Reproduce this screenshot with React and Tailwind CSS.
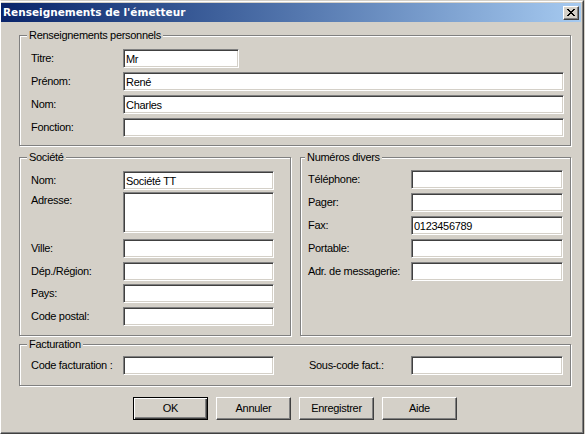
import React from 'react';

const sunken =
  'bg-white border border-[#808080] border-r-white border-b-white shadow-[inset_1px_1px_0_#404040,inset_-1px_-1px_0_#d4d0c8] outline-none px-[2px] text-black';

const Group = ({ title, className, legendClass, children }) => (
  <div className={`border border-[#808080] shadow-[inset_1px_1px_0_#fff,1px_1px_0_#fff] ${className}`}>
    <span className={`block w-fit -mt-[7px] h-[13px] leading-[13px] px-[2px] bg-[#d4d0c8] ${legendClass}`}>
      {title}
    </span>
    {children}
  </div>
);

const Row = ({ label, labelW, inputW, value = '', className = '' }) => (
  <div className={`flex items-center h-[19px] ${className}`}>
    <span className={`${labelW} shrink-0 leading-[13px]`}>{label}</span>
    <input readOnly value={value} className={`${sunken} ${inputW} h-[19px]`} />
  </div>
);

const Button = ({ children, def }) => (
  <button
    className={
      def
        ? 'w-[75px] h-[23px] border border-black shadow-[inset_1px_1px_0_#fff,inset_-1px_-1px_0_#404040,inset_-2px_-2px_0_#808080] bg-[#d4d0c8] leading-[13px]'
        : 'w-[75px] h-[23px] border border-white border-r-[#404040] border-b-[#404040] shadow-[inset_-1px_-1px_0_#808080] bg-[#d4d0c8] leading-[13px]'
    }
  >
    {children}
  </button>
);

const CloseIcon = () => (
  <svg width="8" height="7" viewBox="0 0 8 7" shapeRendering="crispEdges">
    <g fill="#000">
      <rect x="0" y="0" width="2" height="1" />
      <rect x="6" y="0" width="2" height="1" />
      <rect x="1" y="1" width="2" height="1" />
      <rect x="5" y="1" width="2" height="1" />
      <rect x="2" y="2" width="4" height="1" />
      <rect x="3" y="3" width="2" height="1" />
      <rect x="2" y="4" width="4" height="1" />
      <rect x="1" y="5" width="2" height="1" />
      <rect x="5" y="5" width="2" height="1" />
      <rect x="0" y="6" width="2" height="1" />
      <rect x="6" y="6" width="2" height="1" />
    </g>
  </svg>
);

export default function App() {
  return (
    <div className="w-[585px] h-[434px] bg-[#d4d0c8]">
      <div className="w-[584px] h-[434px] border border-[#d4d0c8] border-l-white border-r-[#404040] border-b-[#404040]">
        <div className="h-full border border-white border-l-0 border-r-[#808080] border-b-[#808080] pt-px pr-px pb-px flex flex-col font-['Liberation_Sans',Arial,sans-serif] text-[11px] tracking-[-0.3px] text-black">
          {/* title bar */}
          <div className="h-[19px] shrink-0 flex items-center justify-between bg-linear-to-r from-[#0a246a] to-[#a6caf0] pl-[2px] pr-[2px]">
            <span className="font-['DejaVu_Sans',sans-serif] font-bold text-[10.5px] tracking-normal text-white leading-[13px]">
              Renseignements de l'émetteur
            </span>
            <span className="w-[16px] h-[14px] flex items-center justify-center bg-[#d4d0c8] border border-white border-r-[#404040] border-b-[#404040] shadow-[inset_-1px_-1px_0_#808080]">
              <CloseIcon />
            </span>
          </div>

          {/* client area */}
          <div className="pl-[18px] flex flex-col">
            <Group title="Renseignements personnels" className="mt-[13px] w-[552px] pb-[8px]" legendClass="ml-[7px]">
              <div className="mt-[7px] pl-[11px] flex flex-col gap-[4px]">
                <Row label="Titre:" labelW="w-[92px]" inputW="w-[116px]" value="Mr" />
                <Row label="Prénom:" labelW="w-[92px]" inputW="w-[441px]" value="René" />
                <Row label="Nom:" labelW="w-[92px]" inputW="w-[441px]" value="Charles" />
                <Row label="Fonction:" labelW="w-[92px]" inputW="w-[441px]" />
              </div>
            </Group>

            <div className="mt-[11px] flex gap-[9px]">
              <Group title="Société" className="w-[272px] pb-[9px]" legendClass="ml-[7px]">
                <div className="pl-[11px] flex flex-col">
                  <Row label="Nom:" labelW="w-[92px]" inputW="w-[151px]" value="Société TT" className="mt-[7px]" />
                  <div className="mt-[2px] flex items-start h-[41px]">
                    <span className="w-[92px] shrink-0 leading-[13px] pt-[2px]">Adresse:</span>
                    <textarea readOnly className={`${sunken} w-[151px] h-[41px] resize-none`} />
                  </div>
                  <Row label="Ville:" labelW="w-[92px]" inputW="w-[151px]" className="mt-[6px]" />
                  <Row label="Dép./Région:" labelW="w-[92px]" inputW="w-[151px]" className="mt-[4px]" />
                  <Row label="Pays:" labelW="w-[92px]" inputW="w-[151px]" className="mt-[3px]" />
                  <Row label="Code postal:" labelW="w-[92px]" inputW="w-[151px]" className="mt-[4px]" />
                </div>
              </Group>

              <Group title="Numéros divers" className="w-[271px]" legendClass="ml-[4px]">
                <div className="mt-[6px] pl-[7px] flex flex-col gap-[4px]">
                  <Row label="Téléphone:" labelW="w-[103px]" inputW="w-[152px]" />
                  <Row label="Pager:" labelW="w-[103px]" inputW="w-[152px]" />
                  <Row label="Fax:" labelW="w-[103px]" inputW="w-[152px]" value="0123456789" />
                  <Row label="Portable:" labelW="w-[103px]" inputW="w-[152px]" />
                  <Row label="Adr. de messagerie:" labelW="w-[103px]" inputW="w-[152px]" />
                </div>
              </Group>
            </div>

            <Group title="Facturation" className="mt-[8px] w-[552px] pb-[10px]" legendClass="ml-[7px]">
              <div className="mt-[5px] pl-[11px] flex items-center h-[19px]">
                <span className="w-[92px] shrink-0 leading-[13px]">Code facturation :</span>
                <input readOnly className={`${sunken} w-[151px] h-[19px]`} />
                <span className="ml-[35px] w-[102px] shrink-0 leading-[13px]">Sous-code fact.:</span>
                <input readOnly className={`${sunken} w-[152px] h-[19px]`} />
              </div>
            </Group>

            <div className="mt-[11px] ml-[114px] flex gap-[8px]">
              <Button def>OK</Button>
              <Button>Annuler</Button>
              <Button>Enregistrer</Button>
              <Button>Aide</Button>
            </div>
          </div>
        </div>
      </div>
    </div>
  );
}
